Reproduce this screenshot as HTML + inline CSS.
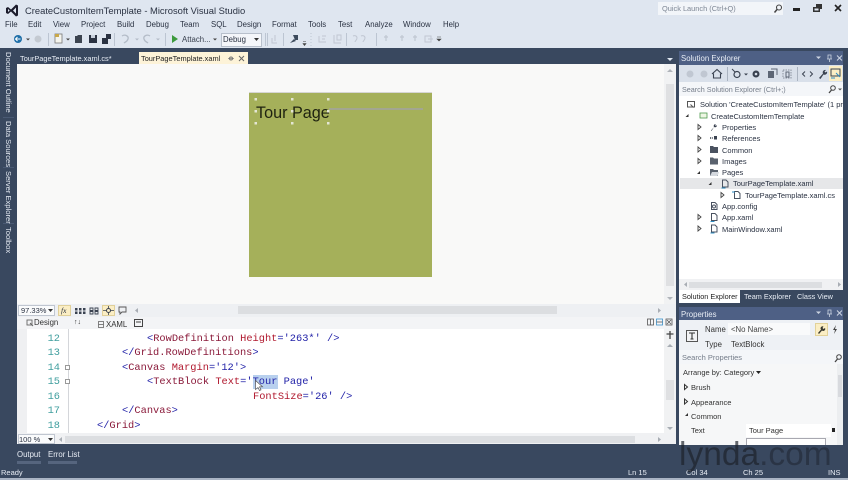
<!DOCTYPE html>
<html>
<head>
<meta charset="utf-8">
<style>
html,body{margin:0;padding:0;width:848px;height:480px;overflow:hidden;background:#dfe6f0}
#r{position:relative;width:848px;height:480px;overflow:hidden;font-family:"Liberation Sans",sans-serif;font-size:7.5px;color:#2a3242;filter:blur(.35px)}
.b{position:absolute}
.t{position:absolute;white-space:nowrap;line-height:12px;height:12px;margin-top:1px}
.m{font-size:7.8px}
.w{color:#e8edf5}
.c{position:absolute;white-space:pre;font-family:"Liberation Mono",monospace;font-size:10.35px;line-height:14px;height:14px;left:0;top:0}
.n{position:absolute;left:46px;width:14px;text-align:right;font-family:"Liberation Mono",monospace;font-size:10.35px;line-height:14px;color:#3f9e9e}
.bl{color:#2222a8}.rd{color:#b0182e}.mr{color:#8a1a3a}
.v{position:absolute;white-space:nowrap;color:#e8edf5;font-size:7.6px;line-height:12px;transform-origin:0 0;transform:rotate(90deg)}
svg{position:absolute;overflow:visible}
</style>
</head>
<body>
<div id="r">
<!-- chrome -->
<div class="b" style="left:0;top:0;width:848px;height:48px;background:#dfe6f0"></div>
<div class="b" style="left:0;top:48px;width:848px;height:432px;background:#39485f"></div>
<div class="b" style="left:0;top:478px;width:848px;height:2px;background:#aab4c4"></div>

<!-- logo -->
<svg style="left:5px;top:3px" width="14" height="15" viewBox="0 0 14 15"><path d="M1 5l2-1 3 2.500L11 1.500l2 1v10l-2 1-5-5-3 2.500-2-1zM3 6v3l1.700-1.500zM11 4.500L8 7.500l3 3z" fill="#1c1c2c" fill-rule="evenodd"/></svg>
<div class="t" style="left:25px;top:3px;font-size:9.4px;line-height:14px;height:14px;color:#2a3242">CreateCustomItemTemplate - Microsoft Visual Studio</div>

<!-- menu -->
<div class="t m" style="left:5px;top:18px">File</div>
<div class="t m" style="left:28px;top:18px">Edit</div>
<div class="t m" style="left:53px;top:18px">View</div>
<div class="t m" style="left:81px;top:18px">Project</div>
<div class="t m" style="left:117px;top:18px">Build</div>
<div class="t m" style="left:146px;top:18px">Debug</div>
<div class="t m" style="left:180px;top:18px">Team</div>
<div class="t m" style="left:211px;top:18px">SQL</div>
<div class="t m" style="left:237px;top:18px">Design</div>
<div class="t m" style="left:272px;top:18px">Format</div>
<div class="t m" style="left:308px;top:18px">Tools</div>
<div class="t m" style="left:338px;top:18px">Test</div>
<div class="t m" style="left:365px;top:18px">Analyze</div>
<div class="t m" style="left:403px;top:18px">Window</div>
<div class="t m" style="left:443px;top:18px">Help</div>

<!-- quick launch -->
<div class="b" style="left:658px;top:2px;width:125px;height:13px;background:#f2f5f9"></div>
<div class="t" style="left:662px;top:2px;color:#7d8694;font-size:7.4px">Quick Launch (Ctrl+Q)</div>
<svg style="left:773px;top:4px" width="10" height="10"><circle cx="6" cy="3.500" r="2.500" fill="none" stroke="#444" stroke-width="1.100"/><path d="M4 5.500L1.500 8.500" stroke="#444" stroke-width="1.500"/></svg>
<div class="b" style="left:793px;top:8px;width:7px;height:2.500px;background:#222"></div>
<svg style="left:813px;top:4px" width="9" height="9"><path d="M3 0h6v5H7v3H0V3h3z" fill="#333"/><rect x="1.500" y="4.500" width="4" height="2" fill="#dfe6f0"/></svg>
<svg style="left:834px;top:4px" width="8" height="8"><path d="M1 1l6 6M7 1L1 7" stroke="#222" stroke-width="1.600"/></svg>

<!-- toolbar -->
<svg style="left:0;top:30px" width="480" height="18">
<circle cx="18" cy="9" r="4" fill="#1f6fa8"/><path d="M15.500 9h5M17.500 7l-2 2 2 2" stroke="#fff" fill="none" stroke-width="1"/>
<path d="M26 8.500h4l-2 2z" fill="#444"/>
<circle cx="38" cy="9" r="3.500" fill="#c4cad2"/>
<path d="M48.500 3v13" stroke="#bcc5d2"/>
<rect x="55" y="4" width="7" height="9" fill="#f4f4ee" stroke="#777" stroke-width=".8"/><path d="M55 4h4v3h-4z" fill="#c9a84a"/>
<path d="M66 8.500h4l-2 2z" fill="#444"/>
<path d="M75 6h2l1-1h4v8h-7z" fill="#3c4450"/>
<rect x="89" y="5" width="8" height="8" fill="#2a3242"/><rect x="91" y="5" width="4" height="3" fill="#c8d0dc"/>
<rect x="102" y="8" width="6" height="6" fill="#2a3242"/><rect x="106" y="4" width="5" height="5" fill="#2a3242"/>
<path d="M114.500 3v13" stroke="#bcc5d2"/>
<path d="M122 6c3-2 7 0 6 3s-3 3-4 4" fill="none" stroke="#b4bcc8" stroke-width="1.300"/>
<path d="M135 8.500h4l-2 2z" fill="#b4bcc8"/>
<path d="M150 6c-3-2-7 0-6 3s3 3 4 4" fill="none" stroke="#b4bcc8" stroke-width="1.300"/>
<path d="M156 8.500h4l-2 2z" fill="#b4bcc8"/>
<path d="M165.500 3v13" stroke="#bcc5d2"/>
<path d="M172 5l6 4-6 4z" fill="#3d9a3d"/>
<path d="M213 8.500h4l-2 2z" fill="#444"/>
<path d="M265.500 3v13M267.500 3v13" stroke="#bcc5d2"/>
<path d="M272 8v5h5M275 5v6" stroke="#c0c7d2" fill="none"/>
<path d="M283.500 3v13" stroke="#bcc5d2"/>
<path d="M290 13l4-4 2 2zM293 5h5v5h-3z" fill="#3c4a5c"/>
<path d="M303 13.500h3l-1.500 2zM303 11.500h3" fill="#444" stroke="#444" stroke-width=".6"/>
<path d="M311 3v13" stroke="#bcc5d2" stroke-dasharray="1 2"/>
<path d="M319 6v6h7M322 6h4M322 9h3" stroke="#c0c7d2" fill="none"/>
<path d="M334 5v8h7M337 5h4v5h-4z" stroke="#c0c7d2" fill="none"/>
<path d="M346.500 3v13" stroke="#bcc5d2"/>
<path d="M353 6c2-1 4 0 4 2s-2 3-2 4M361 6c2-1 4 0 4 2s-2 3-2 4" stroke="#c0c7d2" fill="none"/>
<path d="M376.500 3v13" stroke="#bcc5d2"/>
<path d="M386 5v6M384 7h4M402 5v6M400 7h4M415 5v6M413 7h4" stroke="#c0c7d2" fill="none" stroke-width="1.200"/>
<path d="M425 6h6v6h-6zM428 9h5" stroke="#c0c7d2" fill="none"/>
<path d="M437 9h4l-2 2zM437 7h4" fill="#444" stroke="#444" stroke-width=".6"/>
</svg>
<div class="t" style="left:182px;top:33px;color:#3a4250;font-size:7.8px">Attach...</div>
<div class="b" style="left:221px;top:33px;width:39px;height:12px;background:#f4f6fa;border:1px solid #b8c0cc"></div>
<div class="t" style="left:223px;top:33px;font-size:7.8px">Debug</div>
<svg style="left:254px;top:38px" width="5" height="3"><path d="M0 0h5L2.500 3z" fill="#333"/></svg>

<!-- tabs -->
<div class="t w" style="left:20px;top:52px;font-size:7.4px">TourPageTemplate.xaml.cs*</div>
<div class="b" style="left:139px;top:52px;width:109px;height:12px;background:#fdf3d8"></div>
<div class="t" style="left:141px;top:52px;color:#222;font-size:7.4px">TourPageTemplate.xaml</div>
<svg style="left:228px;top:55px" width="16" height="7"><circle cx="3" cy="3.500" r="1.500" fill="none" stroke="#777"/><path d="M0 3.500h6" stroke="#777" stroke-width=".7"/><path d="M11 1l5 5M16 1l-5 5" stroke="#666" stroke-width="1"/></svg>
<svg style="left:667px;top:58px" width="6" height="3"><path d="M0 0h6L3 3z" fill="#dfe6f0"/></svg>

<!-- left rail -->
<div class="b" style="left:0;top:48px;width:17px;height:396px;background:#39485f"></div>
<div class="b" style="left:3px;top:117px;width:11px;height:1px;background:#4a5a74"></div>
<div class="b" style="left:3px;top:167px;width:11px;height:1px;background:#4a5a74"></div>
<div class="b" style="left:3px;top:223px;width:11px;height:1px;background:#4a5a74"></div>
<div class="v" style="left:14px;top:52px">Document Outline</div>
<div class="v" style="left:14px;top:121px">Data Sources</div>
<div class="v" style="left:14px;top:171px">Server Explorer</div>
<div class="v" style="left:14px;top:227px">Toolbox</div>

<!-- design surface -->
<div class="b" style="left:17px;top:64px;width:659px;height:240px;background:#f9f9f8"></div>
<div class="b" style="left:664px;top:64px;width:12px;height:240px;background:#f1f2f3"></div>
<svg style="left:667px;top:69px" width="6" height="3"><path d="M0 3h6L3 0z" fill="#b0b4ba"/></svg>
<div class="b" style="left:666px;top:84px;width:8px;height:202px;background:#dfe0e2"></div>
<svg style="left:667px;top:297px" width="6" height="3"><path d="M0 0h6L3 3z" fill="#b0b4ba"/></svg>
<div class="b" style="left:249px;top:92px;width:183px;height:1px;background:#d6d6d4"></div>
<div class="b" style="left:249px;top:93px;width:183px;height:184px;background:#a5b05a"></div>
<div class="b" style="left:329px;top:108px;width:94px;height:2px;background:#a3a690"></div>
<div class="t" style="left:256px;top:102px;height:20px;line-height:20px;font-size:16.2px;color:#1e2210">Tour Page</div>
<svg style="left:249px;top:93px" width="90" height="36" fill="#e4e6d4">
<rect x="5.500" y="5" width="2.500" height="2.500"/><rect x="42" y="5" width="2.500" height="2.500"/><rect x="78" y="5" width="2.500" height="2.500"/>
<rect x="5.500" y="17" width="2.500" height="2.500"/><rect x="42" y="17" width="2.500" height="2.500"/><rect x="78" y="17" width="2.500" height="2.500"/>
<rect x="5.500" y="29" width="2.500" height="2.500"/><rect x="42" y="29" width="2.500" height="2.500"/><rect x="78" y="29" width="2.500" height="2.500"/>
</svg>

<!-- zoom bar -->
<div class="b" style="left:17px;top:304px;width:659px;height:13px;background:#eef0f3"></div>
<div class="b" style="left:18px;top:305px;width:37px;height:11px;background:#fafbfc;border:1px solid #c0c6d0;box-sizing:border-box"></div>
<div class="t" style="left:21px;top:304px;font-size:7.500px;line-height:11px;height:11px">97.33%</div>
<svg style="left:48px;top:309px" width="5" height="3"><path d="M0 0h5L2.500 3z" fill="#333"/></svg>
<div class="b" style="left:58px;top:305px;width:13px;height:11px;background:#fbeec4;border:1px solid #e0d09a;box-sizing:border-box"></div>
<div class="t" style="left:61px;top:304px;font-size:7.500px;font-style:italic;font-family:'Liberation Serif',serif;line-height:11px;height:11px">fx</div>
<svg style="left:74px;top:306px" width="60" height="10">
<path d="M1 2h2.500v2.500H1zM5 2h2.500v2.500H5zM9 2h2.500v2.500H9zM1 5.500h2.500V8H1zM5 5.500h2.500V8H5zM9 5.500h2.500V8H9z" fill="#3a4250"/>
<path d="M16 2h3v2.500h-3zM21 2h3v2.500h-3zM16 5.500h3V8h-3zM21 5.500h3V8h-3z" fill="none" stroke="#3a4250" stroke-width=".9"/>
</svg>
<div class="b" style="left:102px;top:305px;width:13px;height:11px;background:#fbeec4;border:1px solid #e0d09a;box-sizing:border-box"></div>
<svg style="left:103px;top:306px" width="11" height="9"><path d="M5.500 0v9M0 4.500h11" stroke="#3a4250" stroke-width=".8"/><circle cx="5.500" cy="4.500" r="2" fill="#fbeec4" stroke="#3a4250"/></svg>
<svg style="left:118px;top:306px" width="9" height="9"><path d="M1 1h7v5H4L2 8V6H1z" fill="none" stroke="#555" stroke-width=".9"/></svg>
<svg style="left:135px;top:308px" width="3" height="5"><path d="M3 0v5L0 2.500z" fill="#a8adb4"/></svg>
<div class="b" style="left:238px;top:306px;width:319px;height:8px;background:#dcdee1"></div>
<svg style="left:658px;top:308px" width="3" height="5"><path d="M0 0v5l3-2.500z" fill="#a8adb4"/></svg>

<!-- split bar -->
<div class="b" style="left:17px;top:317px;width:659px;height:12px;background:#f3f4f6"></div>
<svg style="left:26px;top:319px" width="8" height="8"><rect x="1" y="1" width="5" height="5" fill="none" stroke="#666" stroke-width=".9"/><path d="M4 4l3 3" stroke="#666"/></svg>
<div class="t" style="left:34px;top:316px;color:#333;font-size:7.8px">Design</div>
<div class="t" style="left:74px;top:316px;color:#333;font-size:7px">↑↓</div>
<svg style="left:98px;top:321px" width="6" height="7"><rect x=".5" y=".5" width="5" height="6" fill="none" stroke="#666" stroke-width=".8"/><path d="M.5 3.500h5" stroke="#666" stroke-width=".8"/></svg>
<div class="t" style="left:106px;top:318px;color:#333;font-size:7.8px">XAML</div>
<svg style="left:134px;top:319px" width="9" height="8"><rect x=".5" y=".5" width="8" height="7" fill="none" stroke="#444"/><path d="M2 2.500h5v1H2z" fill="#444"/></svg>
<svg style="left:647px;top:318px" width="27" height="9" fill="none" stroke="#555" stroke-width=".8">
<rect x=".5" y="1" width="6" height="6"/><path d="M3.500 1v6"/>
<rect x="9.500" y="1" width="6" height="6" stroke="#3a8fc8"/><path d="M9.500 4h6"/>
<rect x="19" y="1" width="6" height="6"/><path d="M20 2l4 4M24 2l-4 4"/>
</svg>

<!-- code -->
<div class="b" style="left:17px;top:329px;width:659px;height:104px;overflow:hidden;background:#fff"></div>
<div class="b" style="left:17px;top:329px;width:10px;height:104px;background:#eff0f2"></div>
<div class="b" style="left:68px;top:329px;width:1px;height:104px;background:#d4d6da"></div>
<div class="b" style="left:65px;top:365px;width:5px;height:5px;background:#fff;border:1px solid #999;box-sizing:border-box"></div>
<div class="b" style="left:65px;top:379px;width:5px;height:5px;background:#fff;border:1px solid #999;box-sizing:border-box"></div>
<div class="n" style="top:332px">12</div>
<div class="n" style="top:346px">13</div>
<div class="n" style="top:361px">14</div>
<div class="n" style="top:375px">15</div>
<div class="n" style="top:390px">16</div>
<div class="n" style="top:404px">17</div>
<div class="n" style="top:419px">18</div>
<div class="b" style="left:253px;top:375px;width:25px;height:14px;background:#b8d0ee"></div>
<div class="c" style="left:147px;top:332px"><span class="bl">&lt;</span><span class="mr">RowDefinition</span> <span class="rd">Height</span><span class="bl">='263*' /&gt;</span></div>
<div class="c" style="left:122px;top:346px"><span class="bl">&lt;/</span><span class="mr">Grid.RowDefinitions</span><span class="bl">&gt;</span></div>
<div class="c" style="left:122px;top:361px"><span class="bl">&lt;</span><span class="mr">Canvas</span> <span class="rd">Margin</span><span class="bl">='12'&gt;</span></div>
<div class="c" style="left:147px;top:375px"><span class="bl">&lt;</span><span class="mr">TextBlock</span> <span class="rd">Text</span><span class="bl">='Tour Page'</span></div>
<div class="c" style="left:253px;top:390px"><span class="rd">FontSize</span><span class="bl">='26' /&gt;</span></div>
<div class="c" style="left:122px;top:404px"><span class="bl">&lt;/</span><span class="mr">Canvas</span><span class="bl">&gt;</span></div>
<div class="c" style="left:97px;top:419px"><span class="bl">&lt;/</span><span class="mr">Grid</span><span class="bl">&gt;</span></div>
<svg style="left:255px;top:380px" width="9" height="12"><path d="M.5.500v9l2.500-2 1.500 3 1.500-.7-1.500-3h3z" fill="#fff" stroke="#555" stroke-width=".7"/></svg>

<!-- code scrollbar -->
<div class="b" style="left:664px;top:329px;width:12px;height:104px;background:#f1f2f3"></div>
<svg style="left:664px;top:331px" width="12" height="9"><path d="M6 0v8M2.500 3h7" stroke="#444" stroke-width="1.300"/></svg>
<svg style="left:667px;top:344px" width="6" height="3"><path d="M0 3h6L3 0z" fill="#a8adb4"/></svg>
<div class="b" style="left:666px;top:380px;width:8px;height:20px;background:#dfe0e2"></div>
<svg style="left:667px;top:427px" width="6" height="3"><path d="M0 0h6L3 3z" fill="#a8adb4"/></svg>
<div class="b" style="left:17px;top:433px;width:659px;height:11px;background:#f0f1f3"></div>
<div class="b" style="left:18px;top:434px;width:37px;height:10px;background:#fafbfc;border:1px solid #c0c6d0;box-sizing:border-box"></div>
<div class="t" style="left:19px;top:434px;font-size:7.500px;line-height:10px;height:10px">100 %</div>
<svg style="left:48px;top:438px" width="5" height="3"><path d="M0 0h5L2.500 3z" fill="#333"/></svg>
<svg style="left:59px;top:437px" width="3" height="5"><path d="M3 0v5L0 2.500z" fill="#a8adb4"/></svg>
<div class="b" style="left:65px;top:436px;width:570px;height:7px;background:#dcdee1"></div>
<svg style="left:658px;top:437px" width="3" height="5"><path d="M0 0v5l3-2.500z" fill="#a8adb4"/></svg>

<!-- bottom tabs -->
<div class="t w" style="left:17px;top:448px;font-size:7.8px">Output</div>
<div class="b" style="left:17px;top:461px;width:24px;height:3px;background:#56657e"></div>
<div class="t w" style="left:48px;top:448px;font-size:7.8px">Error List</div>
<div class="b" style="left:48px;top:461px;width:29px;height:3px;background:#56657e"></div>

<!-- status -->
<div class="t w" style="left:1px;top:466px">Ready</div>
<div class="t w" style="left:628px;top:466px">Ln 15</div>
<div class="t w" style="left:686px;top:466px">Col 34</div>
<div class="t w" style="left:743px;top:466px">Ch 25</div>
<div class="t w" style="left:828px;top:466px">INS</div>

<!-- Solution Explorer -->
<div class="b" style="left:679px;top:51px;width:164px;height:14px;background:#4e6085"></div>
<div class="t w" style="left:681px;top:52px;font-size:7.800px">Solution Explorer</div>
<svg style="left:816px;top:54px" width="26" height="9"><path d="M0 2.500h5L2.500 5z" fill="#cdd5e2"/><path d="M12 1h3v4h-3zM13.500 5v3M11 5h5" stroke="#cdd5e2" fill="none" stroke-width=".8"/><path d="M21 1.500l5 5M26 1.500l-5 5" stroke="#cdd5e2"/></svg>
<div class="b" style="left:679px;top:65px;width:164px;height:17px;background:#d9e0ea"></div>
<svg style="left:679px;top:65px" width="164" height="17">
<circle cx="11" cy="9" r="3.500" fill="#c0c7d2"/><circle cx="25" cy="9" r="3.500" fill="#c0c7d2"/>
<path d="M33 9l5-4.500 5 4.500M34.500 8.500V13h7V8.500" fill="none" stroke="#3a4250" stroke-width="1.100"/>
<path d="M48.500 2v14" stroke="#aab3c0"/>
<circle cx="58" cy="9.500" r="3" fill="none" stroke="#3a4250" stroke-width="1.200"/><path d="M53 4l3 3" stroke="#3a4250"/>
<path d="M65 8.500h4l-2 2z" fill="#3a4250"/>
<circle cx="77" cy="9" r="3.500" fill="#3a4250"/><circle cx="77" cy="9" r="1.300" fill="#d9e0ea"/>
<path d="M89 6h6v7h-6z" fill="#5d6675"/><path d="M92 4h6v6" stroke="#5d6675" fill="none"/>
<path d="M104 5h8v8h-8z" fill="none" stroke="#8a929e" stroke-dasharray="1.500 1"/><path d="M107 7h3v5h-3z" stroke="#5d6675" fill="none"/>
<path d="M118.500 2v14" stroke="#aab3c0"/>
<path d="M126 6.500L123.500 9l2.500 2.500M131 6.500L133.500 9 131 11.500" stroke="#3a4250" fill="none"/>
<path d="M140 13l4-4.500a2.500 2.500 0 0 1 3-3.500l-1.500 1.500 1 1L148 6.500a2.500 2.500 0 0 1-3.500 3L141.500 14z" fill="#3a4250"/>
<rect x="150" y="1" width="13" height="15" fill="#fbeec4"/>
<rect x="152" y="4" width="9" height="7" fill="none" stroke="#3a4250"/><path d="M152 13h4M157 8l4 4" stroke="#2f8fc4"/>
</svg>
<div class="b" style="left:679px;top:82px;width:164px;height:14px;background:#f4f6f9"></div>
<div class="t" style="left:682px;top:83px;color:#757d8a;font-size:7.2px">Search Solution Explorer (Ctrl+;)</div>
<svg style="left:828px;top:85px" width="14" height="9"><circle cx="5" cy="3" r="2.300" fill="none" stroke="#444"/><path d="M3.500 5L1 8" stroke="#444" stroke-width="1.300"/><path d="M10 3.500h4L12 5.500z" fill="#555"/></svg>

<div class="b" style="left:679px;top:96px;width:164px;height:194px;background:#fff"></div>
<div class="b" style="left:680px;top:178px;width:164px;height:11px;background:#e6e7e9"></div>

<div class="t" style="left:700px;top:98px">Solution 'CreateCustomItemTemplate' (1 pro</div>
<div class="b" style="left:843px;top:96px;width:5px;height:194px;background:#39485f"></div>
<div class="t" style="left:711px;top:110px">CreateCustomItemTemplate</div>
<div class="t" style="left:722px;top:121px">Properties</div>
<div class="t" style="left:722px;top:132px">References</div>
<div class="t" style="left:722px;top:144px">Common</div>
<div class="t" style="left:722px;top:155px">Images</div>
<div class="t" style="left:722px;top:166px">Pages</div>
<div class="t" style="left:733px;top:177px">TourPageTemplate.xaml</div>
<div class="t" style="left:745px;top:189px">TourPageTemplate.xaml.cs</div>
<div class="t" style="left:722px;top:200px">App.config</div>
<div class="t" style="left:722px;top:211px">App.xaml</div>
<div class="t" style="left:722px;top:223px">MainWindow.xaml</div>
<svg style="left:679px;top:96px" width="90" height="140">
<!-- solution icon -->
<path d="M8.500 5.500h7v5.500h-7z" fill="none" stroke="#555"/><path d="M11.500 8.500l3 3" stroke="#555"/>
<!-- project icon -->
<rect x="21" y="17" width="7" height="5" fill="#eef6e4" stroke="#4d9a4d" stroke-width=".8"/>
<!-- filled expanders -->
<path d="M9.500 18l-3 3h3zM21 75l-3 3h3zM32.500 86l-3 3h3z" fill="#333"/>
<!-- open expanders -->
<path d="M19 28.500l3 2.500-3 2.500zM19 39.500l3 2.500-3 2.500zM19 51l3 2.500-3 2.500zM19 62.500l3 2.500-3 2.500zM42 96.500l3 2.500-3 2.500zM19 118.500l3 2.500-3 2.500zM19 130l3 2.500-3 2.500z" fill="none" stroke="#444" stroke-width=".9"/>
<!-- wrench -->
<path d="M32 34.500l3-3.500a2 2 0 0 1 2-3l-1 1 1 1 1-1a2 2 0 0 1-3 2l-2.500 4z" fill="#3a4250"/>
<!-- refs -->
<path d="M31 42h3" stroke="#3a4250" stroke-width="1.400" stroke-dasharray="1 .8"/><rect x="35" y="40" width="3" height="3.500" fill="#3a4250"/>
<!-- folders -->
<path d="M31 50h3l1 1h4v6h-8z" fill="#4a5260"/>
<path d="M31 61.500h3l1 1h4v6h-8z" fill="#5a626e"/>
<path d="M31 73h3l1 1h4v6h-8z" fill="#5a626e"/><path d="M33 76h7l-1.500 4H31z" fill="#d4d8de"/>
<!-- xaml icons -->
<path d="M43.500 84h3.500l2 2v5h-5.500z" fill="none" stroke="#4a5260"/><path d="M42.500 92h4" stroke="#2f8fc4"/>
<path d="M55.500 95.500h3.500l2 2v5h-5.500z" fill="none" stroke="#4a5260"/><path d="M53 96h3" stroke="#2f8fc4"/>
<path d="M32.500 106.500h3.500l2 2v5h-5.500z" fill="none" stroke="#4a5260"/><circle cx="35" cy="110.500" r="1.500" fill="none" stroke="#4a5260"/>
<path d="M32.500 117.500h3.500l2 2v5h-5.500z" fill="none" stroke="#4a5260"/><path d="M31.500 125.500h4" stroke="#2f8fc4"/>
<path d="M32.500 129h3.500l2 2v5h-5.500z" fill="none" stroke="#4a5260"/><path d="M31.500 137h4" stroke="#2f8fc4"/>
</svg>

<!-- SE bottom scrollbar -->
<div class="b" style="left:679px;top:279px;width:164px;height:11px;background:#f0f1f3"></div>
<svg style="left:684px;top:282px" width="3" height="5"><path d="M3 0v5L0 2.500z" fill="#a8adb4"/></svg>
<div class="b" style="left:689px;top:282px;width:133px;height:6px;background:#dcdee1"></div>
<svg style="left:838px;top:282px" width="3" height="5"><path d="M0 0v5l3-2.500z" fill="#a8adb4"/></svg>

<!-- SE tabs -->
<div class="b" style="left:679px;top:290px;width:61px;height:13px;background:#fff"></div>
<div class="t" style="left:682px;top:290px;color:#222;font-size:7.3px">Solution Explorer</div>
<div class="t w" style="left:744px;top:290px;font-size:7.3px">Team Explorer</div>
<div class="t w" style="left:797px;top:290px;font-size:7.3px">Class View</div>

<!-- Properties -->
<div class="b" style="left:679px;top:307px;width:164px;height:13px;background:#4e6085"></div>
<div class="t w" style="left:681px;top:308px;font-size:7.800px">Properties</div>
<svg style="left:816px;top:309px" width="26" height="9"><path d="M0 2.500h5L2.500 5z" fill="#cdd5e2"/><path d="M12 1h3v4h-3zM13.500 5v3M11 5h5" stroke="#cdd5e2" fill="none" stroke-width=".8"/><path d="M21 1.500l5 5M26 1.500l-5 5" stroke="#cdd5e2"/></svg>
<div class="b" style="left:679px;top:320px;width:164px;height:30px;background:#eef1f5"></div>
<svg style="left:686px;top:330px" width="13" height="13"><rect x=".5" y=".5" width="11" height="11" fill="#f2f3f5" stroke="#555"/><path d="M3 3h6M6 3v6M4.500 9h3" stroke="#333" stroke-width="1.100" fill="none"/></svg>
<div class="t" style="left:705px;top:323px;color:#333;font-size:7.8px">Name</div>
<div class="b" style="left:728px;top:323px;width:82px;height:12px;background:#f9fafb"></div>
<div class="t" style="left:731px;top:323px;color:#444;font-size:7.8px">&lt;No Name&gt;</div>
<div class="b" style="left:815px;top:323px;width:13px;height:13px;background:#fbeec4;border:1px solid #e2d29a;box-sizing:border-box"></div>
<svg style="left:817px;top:325px" width="9" height="9"><path d="M1 8l3-3.500a2 2 0 0 1 2.500-3L5.500 3 6.500 4l1.500-1a2 2 0 0 1-3 2.500L2 9z" fill="#3a3a30"/></svg>
<svg style="left:832px;top:325px" width="6" height="9"><path d="M4 0L1 5h2L2 9l3-5H3z" fill="#444"/></svg>
<div class="t" style="left:705px;top:338px;color:#333;font-size:7.8px">Type</div>
<div class="t" style="left:731px;top:338px;color:#333;font-size:7.8px">TextBlock</div>
<div class="b" style="left:679px;top:350px;width:164px;height:14px;background:#f4f6f9"></div>
<div class="t" style="left:682px;top:351px;color:#757d8a">Search Properties</div>
<svg style="left:834px;top:354px" width="8" height="8"><circle cx="5" cy="3" r="2.300" fill="none" stroke="#444"/><path d="M3.500 5L1 8" stroke="#444" stroke-width="1.300"/></svg>
<div class="b" style="left:679px;top:364px;width:164px;height:81px;background:#f6f7f8"></div>
<div class="t" style="left:683px;top:366px;color:#333">Arrange by: Category</div>
<svg style="left:756px;top:371px" width="5" height="3"><path d="M0 0h5L2.500 3z" fill="#222"/></svg>
<div class="t" style="left:691px;top:381px;color:#333">Brush</div>
<div class="t" style="left:691px;top:396px;color:#333">Appearance</div>
<div class="t" style="left:691px;top:410px;color:#333">Common</div>
<div class="t" style="left:691px;top:424px;color:#333">Text</div>
<svg style="left:684px;top:384px" width="6" height="36"><path d="M.5.500l3 2.500-3 2.500zM.5 15l3 2.500-3 2.500z" fill="none" stroke="#333"/><path d="M4 29l-3 3h3z" fill="#333"/></svg>
<div class="b" style="left:746px;top:424px;width:85px;height:13px;background:#fff"></div>
<div class="t" style="left:749px;top:424px;color:#333">Tour Page</div>
<div class="b" style="left:832px;top:428px;width:3px;height:4px;background:#222"></div>
<div class="b" style="left:746px;top:438px;width:80px;height:7px;background:#fff;border:1px solid #a8a8b0;border-bottom:0;box-sizing:border-box"></div>
<div class="b" style="left:837px;top:364px;width:6px;height:81px;background:#eceef0"></div>
<div class="b" style="left:838px;top:375px;width:4px;height:22px;background:#d8dade"></div>
<div class="b" style="left:843px;top:307px;width:5px;height:140px;background:#39485f"></div>

<!-- watermark -->
<div class="t" style="left:679px;top:431px;height:46px;line-height:46px;font-size:33.5px;color:rgba(28,32,42,.68)">lynda<span style="color:rgba(28,32,42,.48)">.com</span></div>
</div>
</body>
</html>
